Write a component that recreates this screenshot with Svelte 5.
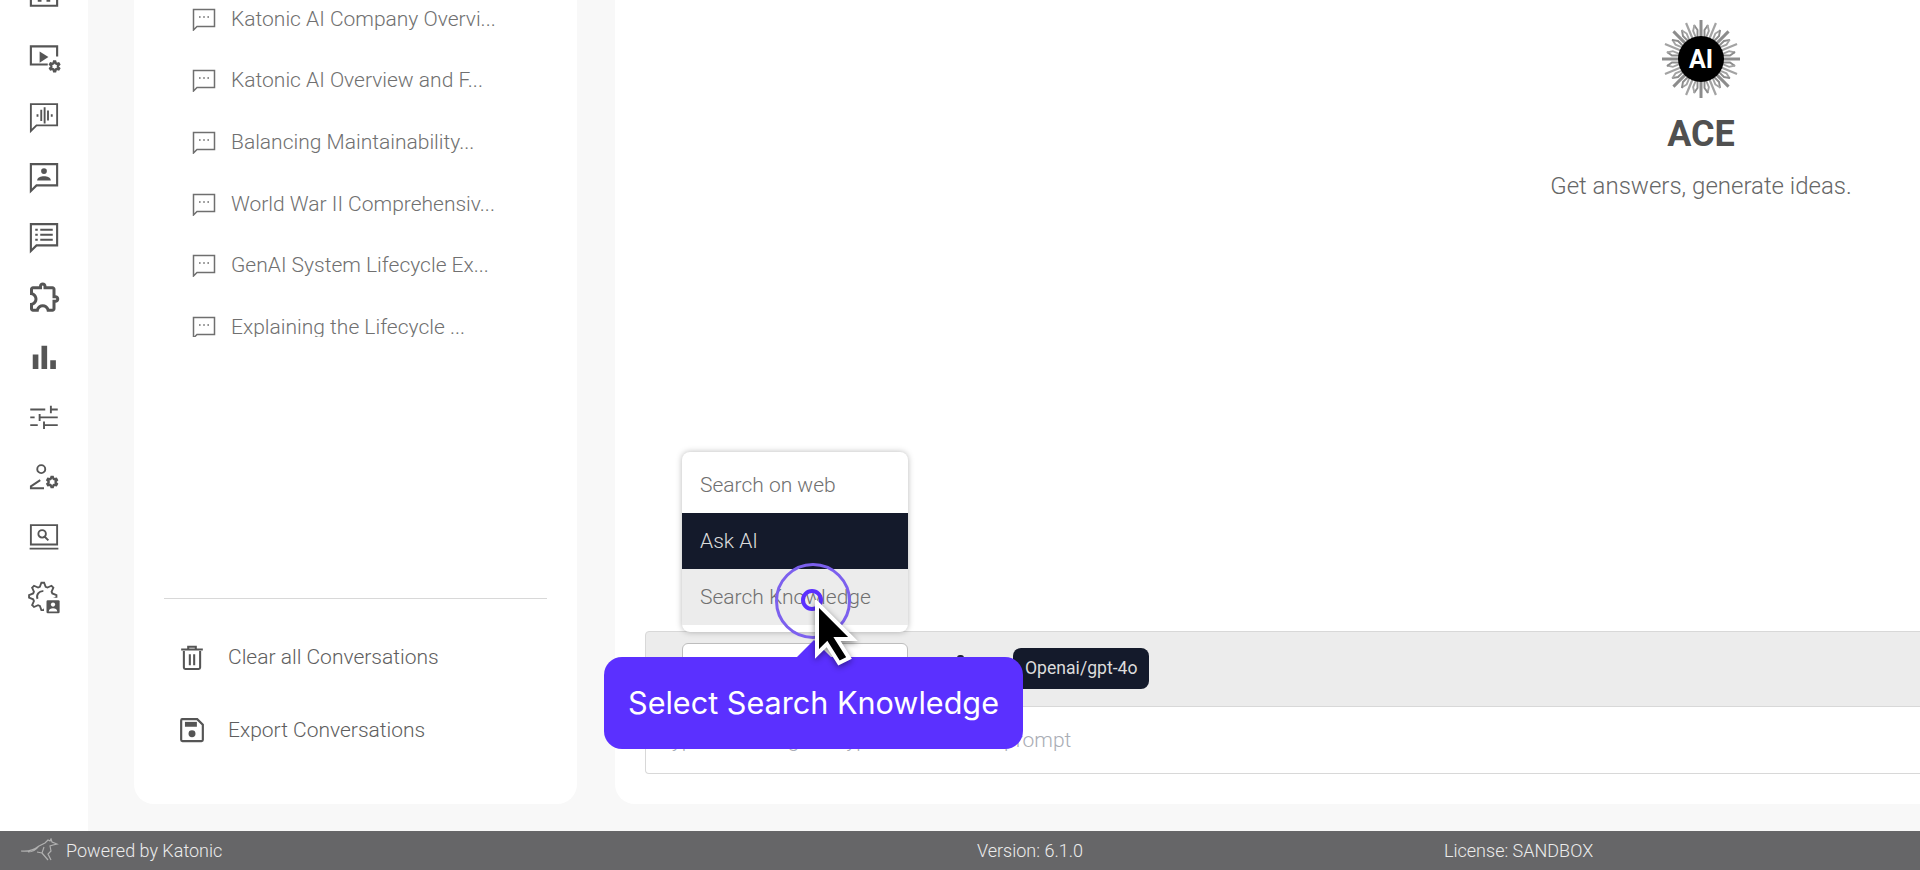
<script>
    // gear outline, used by a few of the rail icons
    function gear(cx, cy, r1, r2, n) {
        let pts = [];
        for (let i = 0; i < n * 4; i++) {
            let r = i % 4 < 2 ? r2 : r1;
            let a = ((i - 0.5) * Math.PI * 2) / (n * 4);
            pts.push((cx + Math.sin(a) * r).toFixed(2) + " " + (cy - Math.cos(a) * r).toFixed(2));
        }
        return "M" + pts.join("L") + "z";
    }

    const bubble = "M1.5 1.7h21v17H6L1.5 23.2z";

    const railIcons = [
        { line: "M1.5 -4h21v23h-21zM7 15h3M14 15h3", fill: "" },
        { line: "M15 18H1.5V3.5h21v8", fill: "M8.5 7.500l7 4.5-7 4.5z", gear: [20.5, 19.5, 2.6, 4, 6] },
        { line: bubble + "M9.8 6.200v9M12.5 4.200v13M15.2 6.700v8M6.800 9.700v2M18.2 9.700v2", fill: "", thin: true },
        { line: bubble, fill: "M12 4.900a2.3 2.3 0 1 1 0 4.6a2.3 2.3 0 0 1 0-4.6zM6.5 14.700c0-2.2 3-3.3 5.5-3.3s5.5 1.1 5.5 3.3z" },
        { line: bubble + "M9 6.200h10M9 10.200h10M9 14.200h10M5 6.200h2M5 10.200h2M5 14.200h2", fill: "" },
        { line: "", fill: "M10.5 4.5c.28 0 .5.22.5.5v2h6v6h2c.28 0 .5.22.5.5s-.22.5-.5.5h-2v6h-2.12c-.68-1.75-2.39-3-4.38-3s-3.7 1.25-4.38 3H4v-2.12c1.75-.68 3-2.39 3-4.38 0-1.99-1.24-3.7-2.99-4.38L4 7h6V5c0-.28.22-.5.5-.5m0-2C9.12 2.5 8 3.62 8 5H4c-1.1 0-1.99.9-1.99 2v3.8h.29c1.49 0 2.7 1.21 2.7 2.7s-1.21 2.7-2.7 2.7H2V20c0 1.1.9 2 2 2h3.8v-.3c0-1.49 1.21-2.7 2.7-2.7s2.7 1.21 2.7 2.7v.3H17c1.1 0 2-.9 2-2v-4c1.38 0 2.5-1.12 2.5-2.5S20.38 11 19 11V7c0-1.1-.9-2-2-2h-4c0-1.38-1.12-2.5-2.5-2.5z", fillTransform: "translate(-1.6 -2.6) scale(1.2)" },
        { line: "", fill: "M3 10h4.5v11.5H3zM10 3h4.5v18.5H10zM17 14.5h4.5v7H17z" },
        { line: "M1 6h12M17.5 6h5.5M17.5 3v6M1 12.3h3.5M8.5 9.500v5.600M8.5 12.3h14.5M1 18.5h6M12 15.5v6M12 18.5h11", fill: "", thin: true },
        { line: "M9.8 2.5a3.2 3.2 0 1 1 0 6.4a3.2 3.2 0 0 1 0-6.4zM12 21H1.5v-1.5L9 14.5", fill: "", thin: true, gear: [18.5, 16, 2.8, 4.2, 6] },
        { line: "M1.5 2.5h21v15.5h-21zM.5 21.300h23M10.5 6.500a3 3 0 1 1 0 6a3 3 0 0 1 0-6zM12.8 12l2.700 2.700", fill: "", thin: true },
        { line: gear(11, 11.5, 8, 11, 8) + "M6.800 13.500a4.500 4.500 0 0 1 4.700-6.200", fill: "", thin: true, badge: true }
    ];

    const chats = [
        "Katonic AI Company Overvi...",
        "Katonic AI Overview and F...",
        "Balancing Maintainability...",
        "World War II Comprehensiv...",
        "GenAI System Lifecycle Ex...",
        "Explaining the Lifecycle ..."
    ];

    const rays = Array.from({ length: 16 }, (_, i) => i * 22.5);
</script>

<div class="app">
    <div class="body">
        <nav class="rail">
            {#each railIcons as icon}
                <svg class="rail-icon" viewBox="0 0 24 24" width="30" height="30">
                    {#if icon.fill}<path d={icon.fill} fill="#555" transform={icon.fillTransform} />{/if}
                    {#if icon.line}
                        <path d={icon.line} fill="none" stroke="#555" stroke-width={icon.thin ? 1.5 : 1.7} />
                    {/if}
                    {#if icon.gear}
                        <path d={gear(...icon.gear)} fill="#fff" stroke="#555" stroke-width="1.8" />
                    {/if}
                    {#if icon.badge}
                        <rect x="12" y="12.5" width="13" height="13" rx="1.4" fill="#fff" />
                        <rect x="14" y="14.5" width="10.5" height="10.5" rx="1" fill="#555" />
                        <circle cx="19.2" cy="18" r="1.7" fill="#fff" />
                        <path d="M15.8 23.5c0-1.8 1.7-2.5 3.4-2.5s3.4 .7 3.4 2.5z" fill="#fff" />
                    {/if}
                </svg>
            {/each}
        </nav>

        <div class="content">
            <aside class="panel">
                <div class="history">
                    <ul>
                        {#each chats as chat}
                            <li>
                                <svg viewBox="0 0 24 24" width="24" height="24">
                                    <path d="M1.5 2.5h21v17H5l-3.5 3.5z" fill="none" stroke="#6f6f6f" stroke-width="1.5" />
                                    <path d="M7 10h1.6M11.2 10h1.6M15.4 10h1.6" stroke="#6f6f6f" stroke-width="1.6" />
                                </svg>
                                <span>{chat}</span>
                            </li>
                        {/each}
                    </ul>
                </div>
                <div class="actions">
                    <div class="action">
                        <svg viewBox="0 0 24 24" width="26" height="28">
                            <path d="M4.5 6.5v15.2a1.3 1.3 0 0 0 1.3 1.3h12.4a1.3 1.3 0 0 0 1.3-1.3V6.5M2 5h20M8.5 5V2.5h7V5M10 9.5v10M14 9.5v10" fill="none" stroke="#555" stroke-width="1.9" />
                        </svg>
                        <span>Clear all Conversations</span>
                    </div>
                    <div class="action">
                        <svg viewBox="0 0 24 24" width="26" height="28">
                            <path d="M2.2 2h14.6L22 7.2V21a1.2 1.2 0 0 1-1.2 1.2H3.2A1.2 1.2 0 0 1 2 21V3.2A1.2 1.2 0 0 1 3.2 2z" fill="none" stroke="#555" stroke-width="2" />
                            <rect x="5.5" y="4.5" width="11" height="4.5" fill="#555" />
                            <circle cx="12" cy="15.5" r="3.2" fill="#555" />
                        </svg>
                        <span>Export Conversations</span>
                    </div>
                </div>
            </aside>

            <main class="main">
                <section class="hero">
                    <svg class="logo" viewBox="-40 -40 80 80" width="80" height="80">
                        {#each rays as deg, i}
                            <g transform="rotate({deg})" fill="none" stroke={i % 2 ? "#a3a3a3" : "#8c8c8c"}>
                                <path d="M0 -20V-39" stroke-width={i % 2 ? 2.2 : 3} />
                                <path d="M-3.5 -22V-29L-7 -34M3.5 -22V-29L7 -34" stroke-width="1.9" />
                            </g>
                        {/each}
                        <circle r="23" fill="#000" />
                        <text y="9" text-anchor="middle" class="logo-text">AI</text>
                    </svg>
                    <h1>ACE</h1>
                    <p>Get answers, generate ideas.</p>
                </section>

                <div class="composer">
                    <div class="toolbar">
                        <div class="select"></div>
                        <span class="tool-icon"></span>
                        <div class="tooltip">Openai/gpt-4o</div>
                        <div class="dropdown">
                            <div class="opt">Search on web</div>
                            <div class="opt selected">Ask AI</div>
                            <div class="opt hovered">Search Knowledge</div>
                        </div>
                    </div>
                    <div class="prompt">Type a message or type '/' to select a prompt</div>
                </div>
            </main>
        </div>
    </div>

    <footer class="footer">
        <div class="brand">
            <svg viewBox="0 0 40 26" width="40" height="26">
                <path d="M1 13c8 1 13-1 18-5l6-3 3-3 2 1 1-2 1 3 5 2-4 1-3 1 1 5-3 3 3 6M19 8c-3 4-7 6-11 6M24 9l-2 6 6 7M22 15l-5-1" fill="none" stroke="#b0b0b0" stroke-width="1.2" />
            </svg>
            <span>Powered by Katonic</span>
        </div>
        <div>Version: 6.1.0</div>
        <div>License: SANDBOX</div>
    </footer>

    <div class="ring"></div>
    <div class="dot"></div>
    <div class="callout">Select Search Knowledge</div>
    <svg class="cursor" viewBox="0 0 44 68" width="44" height="68">
        <path d="M3 3V54L13 44L25 63L35 58L23 39H39z" fill="#000" stroke="#fff" stroke-width="4" />
    </svg>
</div>

<style>
    :global(body) {
        margin: 0;
        font-family: Roboto, "Liberation Sans", sans-serif;
    }

    .app {
        position: relative;
        display: flex;
        flex-direction: column;
        height: 870px;
        overflow: hidden;
        background: #f8f8f8;
    }

    .body {
        flex: 1;
        display: flex;
        min-height: 0;
    }

    /* left icon rail */
    .rail {
        flex: none;
        width: 88px;
        background: #fff;
        display: flex;
        flex-direction: column;
        align-items: center;
        gap: 30px;
        margin-top: -18px;
    }

    .rail-icon {
        flex: none;
        overflow: visible;
    }

    .content {
        flex: 1;
        display: flex;
        gap: 38px;
        padding: 0 0 27px 46px;
        min-width: 0;
    }

    /* conversation panel */
    .panel {
        flex: none;
        width: 443px;
        background: #fff;
        border-radius: 0 0 20px 20px;
        display: flex;
        flex-direction: column;
    }

    .history {
        height: 337px;
        overflow: hidden;
    }

    .history ul {
        list-style: none;
        margin: -12px 0 0;
        padding: 0 0 0 58px;
    }

    .history li {
        display: flex;
        align-items: center;
        gap: 15px;
        height: 61.6px;
        font-size: 21px;
        font-weight: 300;
        color: #707070;
        white-space: nowrap;
    }

    .actions {
        margin: auto 30px 0;
        padding: 21px 0 38px;
        border-top: 1px solid #d8d8d8;
    }

    .action {
        display: flex;
        align-items: center;
        height: 73px;
        padding-left: 15px;
        gap: 23px;
        font-size: 21px;
        font-weight: 300;
        color: #5e5e5e;
    }

    .action svg {
        flex: none;
    }

    /* main chat area */
    .main {
        flex: none;
        width: 2172px;
        background: #fff;
        border-radius: 0 0 0 20px;
        display: flex;
        flex-direction: column;
    }

    .hero {
        flex: 1;
        padding-top: 19px;
        text-align: center;
    }

    .logo {
        display: block;
        margin: 0 auto;
    }

    .logo-text {
        font-size: 25px;
        font-weight: 700;
        fill: #fff;
    }

    .hero h1 {
        margin: 14px 0 0;
        font-size: 36px;
        line-height: 42px;
        font-weight: 700;
        color: #505050;
    }

    .hero p {
        margin: 16px 0 0;
        font-size: 24px;
        line-height: 30px;
        font-weight: 300;
        color: #666;
    }

    .composer {
        margin: 0 31px 30px 30px;
    }

    .toolbar {
        position: relative;
        display: flex;
        align-items: flex-start;
        box-sizing: border-box;
        height: 76px;
        padding: 11px 0 0 36px;
        background: #ececec;
        border: 1px solid #d8d8d8;
        border-radius: 4px 4px 0 0;
    }

    .select {
        box-sizing: border-box;
        width: 226px;
        height: 52px;
        background: #fff;
        border: 1px solid #bdbdbd;
        border-radius: 6px;
    }

    .tool-icon {
        width: 7px;
        height: 16px;
        margin: 12px 0 0 49px;
        background: #23263a;
        border-radius: 3px;
    }

    .tooltip {
        position: absolute;
        left: 367px;
        top: 16px;
        height: 41px;
        line-height: 41px;
        padding: 0 12px;
        background: #141a2b;
        color: #dcdcdc;
        font-size: 17.6px;
        border-radius: 8px;
    }

    .dropdown {
        position: absolute;
        left: 36px;
        bottom: 100%;
        box-sizing: border-box;
        width: 226px;
        padding: 5px 0 7px;
        background: #fff;
        border-radius: 8px;
        box-shadow: 0 0 6px rgba(0, 0, 0, 0.28);
    }

    .opt {
        height: 56px;
        line-height: 56px;
        padding-left: 18px;
        font-size: 21px;
        font-weight: 300;
        color: #707070;
    }

    .opt.selected {
        background: #141a2b;
        color: #dcdcdc;
    }

    .opt.hovered {
        background: #ececec;
    }

    .prompt {
        box-sizing: border-box;
        height: 67px;
        padding: 19px 0 0 14px;
        background: #fff;
        border: 1px solid #d8d8d8;
        border-top: 0;
        border-radius: 0 0 4px 4px;
        font-size: 21px;
        line-height: 28px;
        font-weight: 300;
        color: #a9adb5;
    }

    .footer {
        flex: none;
        display: grid;
        grid-template-columns: 977px 467px 1fr;
        align-items: center;
        height: 39px;
        background: #666668;
        color: #ececec;
        font-size: 18px;
        font-weight: 300;
    }

    .brand {
        display: flex;
        align-items: center;
        gap: 6px;
        padding-left: 20px;
    }

    /* tour overlay */
    .ring {
        position: absolute;
        left: 775px;
        top: 563px;
        width: 70px;
        height: 70px;
        border: 3px solid #7c60ee;
        border-radius: 50%;
    }

    .dot {
        position: absolute;
        left: 801px;
        top: 589px;
        box-sizing: border-box;
        width: 22px;
        height: 22px;
        border: 4px solid #5b30ff;
        border-radius: 50%;
    }

    .callout {
        position: absolute;
        left: 604px;
        top: 657px;
        box-sizing: border-box;
        width: 419px;
        height: 92px;
        padding-left: 24px;
        line-height: 92px;
        background: #5b30ff;
        border-radius: 18px;
        color: #fff;
        font-family: Inter, "Liberation Sans", sans-serif;
        font-size: 30.6px;
        white-space: nowrap;
    }

    .callout::before {
        content: "";
        position: absolute;
        left: 193px;
        top: -17px;
        width: 34px;
        height: 17px;
        background: #5b30ff;
        clip-path: polygon(0 100%, 50% 0, 100% 100%);
    }

    .cursor {
        position: absolute;
        left: 814px;
        top: 600px;
        filter: drop-shadow(0 2px 3px rgba(0, 0, 0, 0.45));
    }
</style>
